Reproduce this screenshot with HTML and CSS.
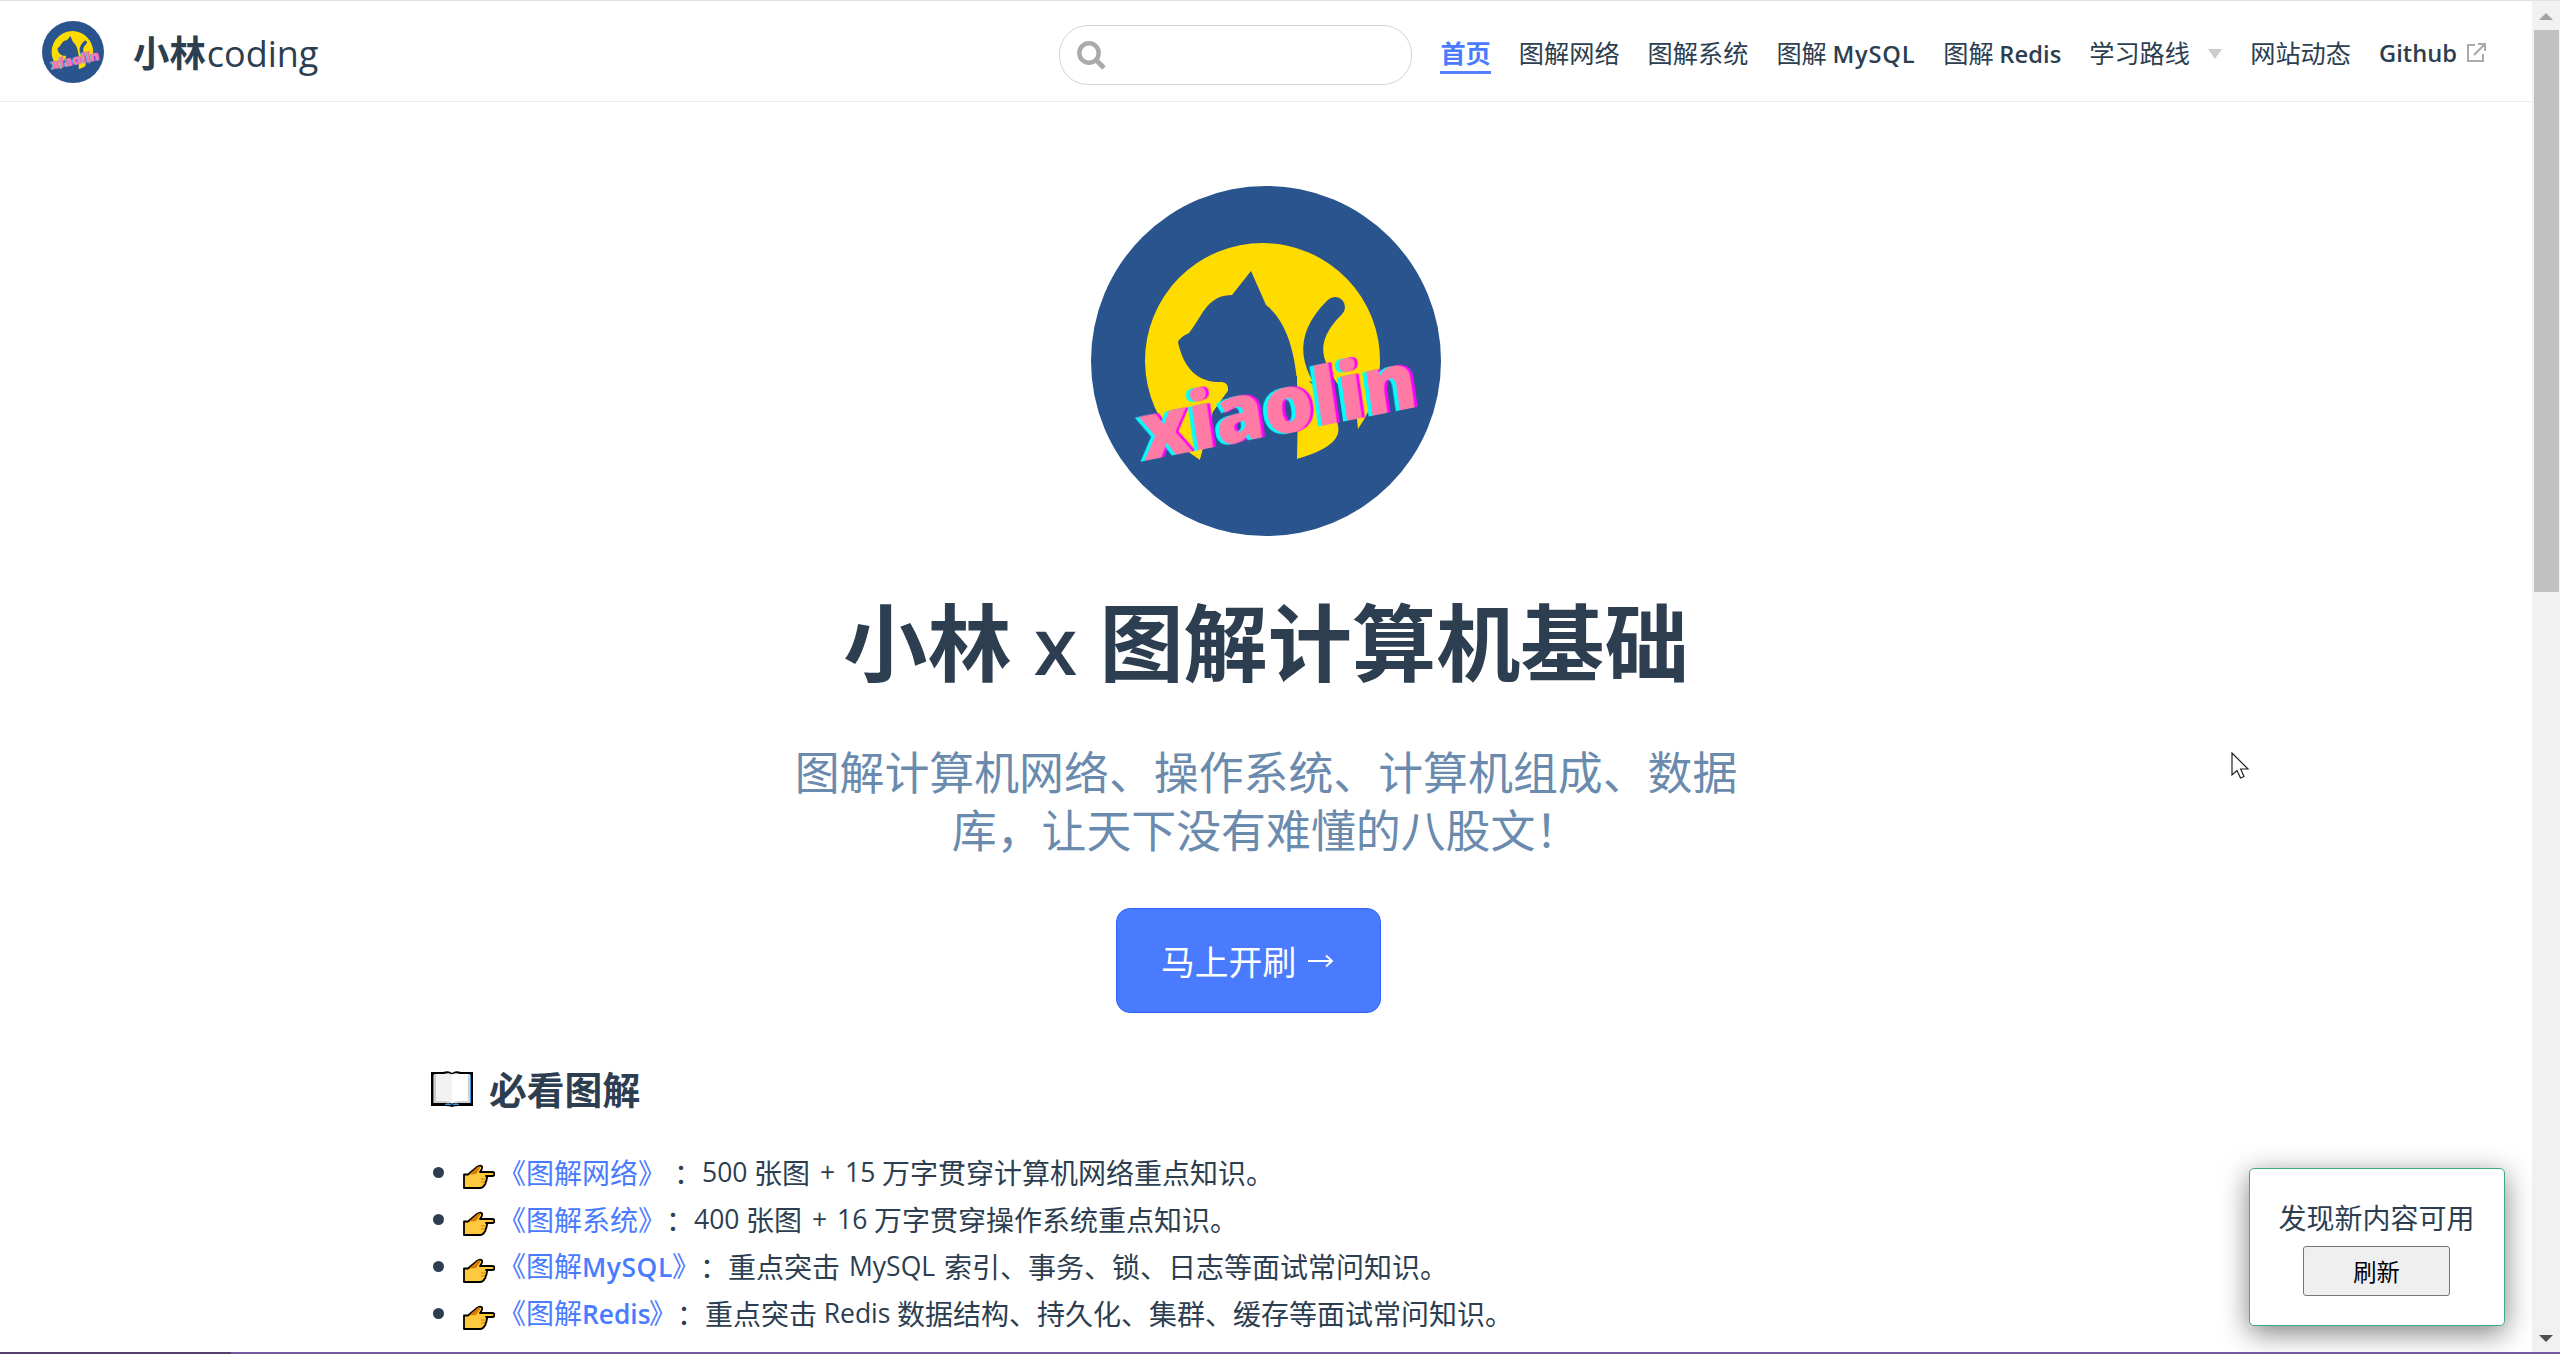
FILE: index.html
```html
<!DOCTYPE html>
<html lang="zh-CN">
<head>
<meta charset="utf-8">
<title>小林coding</title>
<link rel="stylesheet" href="styles.css">
</head>
<body>
<svg class="defs" width="0" height="0" aria-hidden="true">
  <symbol id="logo" viewBox="0 0 350 350">
    <circle cx="175" cy="175" r="175" fill="#29548d"/>
    <path fill="#ffdc00" d="M109 274A117.500 117.500 0 1 1 267 243L265 225L240 200L218 195Q246 222 247 240Q252 260 206 273V190H137V205L122 226Z"/>
    <path fill="#29548d" d="M87 156Q89 151 98 147C105 139 112 122 122 115Q129 109 141 109L160 85L175 119C196 135 207 170 207 220L206 273L109 274L122 226Q129 216 137 205Q138 197 131 196C108 197 93 184 87 156Z"/>
    <path fill="none" stroke="#29548d" stroke-width="20" stroke-linecap="round" d="M244 121C210 154 218 180 252 222"/>
    <g class="logo-word" transform="translate(53 275) rotate(-11.200) skewX(-3)">
      <text textLength="281" lengthAdjust="spacingAndGlyphs">xiaolin</text>
    </g>
  </symbol>
  <symbol id="hand" viewBox="0 0 32 25">
    <path d="M1 10.500H5L14 3Q17 .5 19 2.500Q20 4 17 8H29Q31.500 8 31.500 10Q31.500 12 29 12H23Q25 13 23.500 15Q24 17 22.500 18Q23 20 21.500 21Q20 24 17 24H1Z" fill="#ffc83d" stroke="#000" stroke-width="1.800" stroke-linejoin="round"/>
    <path d="M6 10.500L15 2.500Q18 2 17 4L13 10Z" fill="#d67d00"/>
    <path d="M18 15H22M18 18H21.500" stroke="#d67d00" fill="none"/>
  </symbol>
</svg>
<div class="page">
  <header class="navbar">
    <svg class="brand-logo"><use href="#logo"/></svg>
    <div class="brand">小林<span class="brand-latin">coding</span></div>
    <div class="search"><svg width="30" height="30" viewBox="0 0 30 30" fill="none" stroke="#aaa"><circle cx="12" cy="12" r="9.700" stroke-width="4.400"/><path d="M19 19L27 27" stroke-width="5"/></svg></div>
    <nav class="links">
      <a class="active w2">首页</a>
      <a class="w4">图解网络</a>
      <a class="w4">图解系统</a>
      <a class="mysql">图解 <span class="semi">MySQL</span></a>
      <a class="redis">图解 <span class="semi">Redis</span></a>
      <a class="route">学习路线<i class="caret"></i></a>
      <a class="w4">网站动态</a>
      <a class="github"><span class="semi">Github</span><svg width="21" height="21" viewBox="0 0 21 21" fill="none" stroke="#aaa" stroke-width="2"><path d="M9 3H2V19H17V12M12 2H19V9M19 2L8 13"/></svg></a>
    </nav>
  </header>
  <main class="home">
    <svg class="hero-logo"><use href="#logo"/></svg>
    <h1>小林 <span class="x">x</span> 图解计算机基础</h1>
    <p class="description">图解计算机网络、操作系统、计算机组成、数据<br>库，让天下没有难懂的八股文！</p>
    <a class="action">马上开刷<svg width="26" height="14" viewBox="0 0 26 14" fill="none" stroke="#fff" stroke-width="2"><path d="M0 7H24M18 1.500L24 7L18 12.500"/></svg></a>
    <section class="content">
      <h2><svg width="44" height="38" viewBox="0 0 44 38"><path d="M1 2H13Q19 0 22 3Q25 0 31 2H43V36H28Q24 36 22 37Q20 36 16 36H1Z" fill="#000"/><path d="M3 5H41V33H3Z" fill="#3a96dd"/><path d="M4 4H22V33H4Z" fill="#ccc"/><path d="M22 4H40V33H22Z" fill="#d2d2d2"/><path d="M15 34Q20 32 22 35Q24 32 29 34V35H15Z" fill="#3a96dd"/><path d="M6 4H14Q20 2 22 5V34Q20 31 15 31H6Z" fill="#f2f2f2"/><path d="M38 4H30Q24 2 22 5V34Q24 31 29 31H38Z" fill="#fff"/></svg>必看图解</h2>
      <ul>
        <li><svg class="hand"><use href="#hand"/></svg><a>《图解网络》</a><span class="sp"></span>：<span class="lat l500">500</span>张图<span class="lat plus">+</span><span class="lat l15">15</span>万字贯穿计算机网络重点知识。</li>
        <li><svg class="hand"><use href="#hand"/></svg><a>《图解系统》</a>：<span class="lat l500">400</span>张图<span class="lat plus">+</span><span class="lat l15">16</span>万字贯穿操作系统重点知识。</li>
        <li><svg class="hand"><use href="#hand"/></svg><a>《图解<span class="semi k-mysql">MySQL</span>》</a>：重点突击<span class="lat t-mysql">MySQL</span>索引、事务、锁、日志等面试常问知识。</li>
        <li><svg class="hand"><use href="#hand"/></svg><a>《图解<span class="semi k-redis">Redis</span>》</a>：重点突击<span class="lat t-redis">Redis</span>数据结构、持久化、集群、缓存等面试常问知识。</li>
      </ul>
    </section>
  </main>
</div>
<div class="scrollbar"><i class="up"></i><div class="thumb"></div><i class="down"></i></div>
<div class="popup">发现新内容可用<button>刷新</button></div>
<svg class="cursor" width="20" height="30" viewBox="0 0 20 30"><path d="M1 1V23L6 18.500L9.500 26L13 24.500L9.700 17H17Z" fill="#fff" stroke="#222" stroke-width="1.200"/></svg>
<div class="taskline"></div>
</body>
</html>
```

FILE: styles.css
```css
* { box-sizing: border-box; }
body {
  margin: 0;
  width: 2560px;
  height: 1354px;
  overflow: hidden;
  display: flex;
  position: relative;
  background: #fff;
  color: #2c3e50;
  font-family: "Noto Sans CJK SC", sans-serif;
  font-size: 28px;
  border-top: 1px solid #dfe3e9;
}
.defs { position: absolute; }
svg { flex: none; }
.page { width: 2532px; height: 1353px; overflow: hidden; }
.logo-word { filter: drop-shadow(-3.5px 0 0 #00ffff) drop-shadow(3.5px 0 0 #ff00ff); }
.logo-word text { font: 900 79px "Noto Sans", sans-serif; fill: #ff7ba6; }

.navbar {
  height: 101px;
  border-bottom: 1px solid #eaecef;
  display: flex;
  align-items: center;
  padding: 0 44px 0 42px;
}
.brand-logo { width: 62px; height: 62px; margin: 2px 29px 0 0; }
.brand { width: 926px; font-size: 36.4px; font-weight: 700; line-height: 50px; white-space: nowrap; padding-top: 1px; }
.brand-latin { font: 500 36px "Open Sans", sans-serif; margin-left: 1px; }
.search {
  width: 354px;
  height: 60px;
  border: 1.5px solid #cfd4db;
  border-radius: 29px;
  margin: 8px 28px 0 0;
  padding: 13px 0 0 17px;
}
.links { display: flex; gap: 28px; font-size: 25.2px; line-height: 38px; white-space: nowrap; padding-top: 5px; }
.links a { height: 41px; }
.w2 { width: 50.4px; }
.w4 { width: 100.8px; }
.mysql { width: 138.8px; }
.redis { width: 118px; }
.route { width: 133px; display: flex; align-items: center; padding-bottom: 3px; }
.github { display: flex; gap: 9px; width: 109px; }
.github svg { margin-top: 9px; }
.github .semi { padding-top: 1px; }
.mysql .semi { letter-spacing: .8px; }
.redis .semi { letter-spacing: .1px; }
.active { color: #4a7bff; font-weight: 700; border-bottom: 3px solid #5681ff; }
.semi { font-family: "Open Sans", sans-serif; font-weight: 600; font-size: .94em; }
.caret { border: 7px solid transparent; border-top: 10px solid #ccc; border-bottom: 0; margin: 3px 0 0 18px; }

.home { display: flex; flex-direction: column; align-items: center; padding-top: 84px; }
.hero-logo { width: 350px; height: 350px; }
h1 { margin: 50px 0 0; font-size: 84.2px; line-height: 104px; font-weight: 700; white-space: nowrap; word-spacing: 3px; }
.x { font-family: "Open Sans", sans-serif; font-weight: 600; font-size: 79px; }
.description { margin: 45px 0 0; font-size: 44.9px; line-height: 58.2px; color: #6a8bad; text-align: center; white-space: nowrap; }
.action {
  width: 265px;
  height: 105px;
  margin: 50px 35px 0 0;
  border: 1px solid #2a64ff;
  border-radius: 14px;
  background: #4a7bff;
  color: #fff;
  font-size: 33.8px;
  display: flex;
  align-items: center;
  gap: 12px;
  padding-left: 44px;
}
.content { width: 1680px; padding-left: 4px; }
h2 { display: flex; align-items: center; gap: 15px; margin: 45px 0 0; font-size: 37.8px; line-height: 60px; }
h2 svg { margin-top: 2px; }
ul { list-style: none; margin: 31px 0 0; padding: 0; line-height: 47px; }
li { height: 47px; display: flex; align-items: center; white-space: nowrap; }
li::before { content: ""; width: 11px; height: 11px; border-radius: 50%; background: #2c3e50; margin: 0 19px 0 3px; }
li a { color: #4a7bff; }
.hand { width: 32px; height: 25px; margin: 8px 3px 0 0; }
.sp { width: 8px; }
.lat { font-family: "Open Sans", sans-serif; font-size: 26.5px; text-align: center; }
.l500 { width: 52px; text-align: left; }
.plus { width: 35px; }
.l15 { width: 37px; text-align: left; }
.t-mysql { width: 104px; }
.t-redis { width: 80px; }
.k-mysql, .k-redis { display: inline-block; }
.k-mysql { width: 90px; letter-spacing: .6px; }
.k-redis { width: 67px; }

.scrollbar { width: 28px; background: #f1f1f1; display: flex; flex-direction: column; align-items: center; padding-top: 12px; }
.scrollbar i { border: 7px solid transparent; }
.up { border-top: 0 !important; border-bottom-color: #a3a3a3 !important; }
.down { border-bottom: 0 !important; border-top-color: #505050 !important; margin-top: 743px; }
.thumb { width: 25px; height: 562px; margin-top: 10px; background: #c1c1c1; }

.popup {
  position: absolute;
  left: 2249px;
  top: 1167px;
  width: 256px;
  height: 158px;
  border: 1px solid #3eaf7c;
  border-radius: 5px;
  background: #fff;
  box-shadow: 0 7px 28px rgba(0, 0, 0, .5);
  display: flex;
  flex-direction: column;
  align-items: center;
  padding: 24px 1px 0 0;
  line-height: 48px;
}
.popup button {
  width: 147px;
  height: 50px;
  margin-top: 5px;
  border: 1px solid #767676;
  border-radius: 3px;
  background: #efefef;
  color: #000;
  font: 23.3px "Noto Sans CJK SC", sans-serif;
}
.cursor { position: absolute; left: 2231px; top: 751px; }
.taskline { position: absolute; left: 0; top: 1351px; width: 2560px; height: 2px; background: linear-gradient(90deg, #54406c 231px, #7557a0 231px); }
```
